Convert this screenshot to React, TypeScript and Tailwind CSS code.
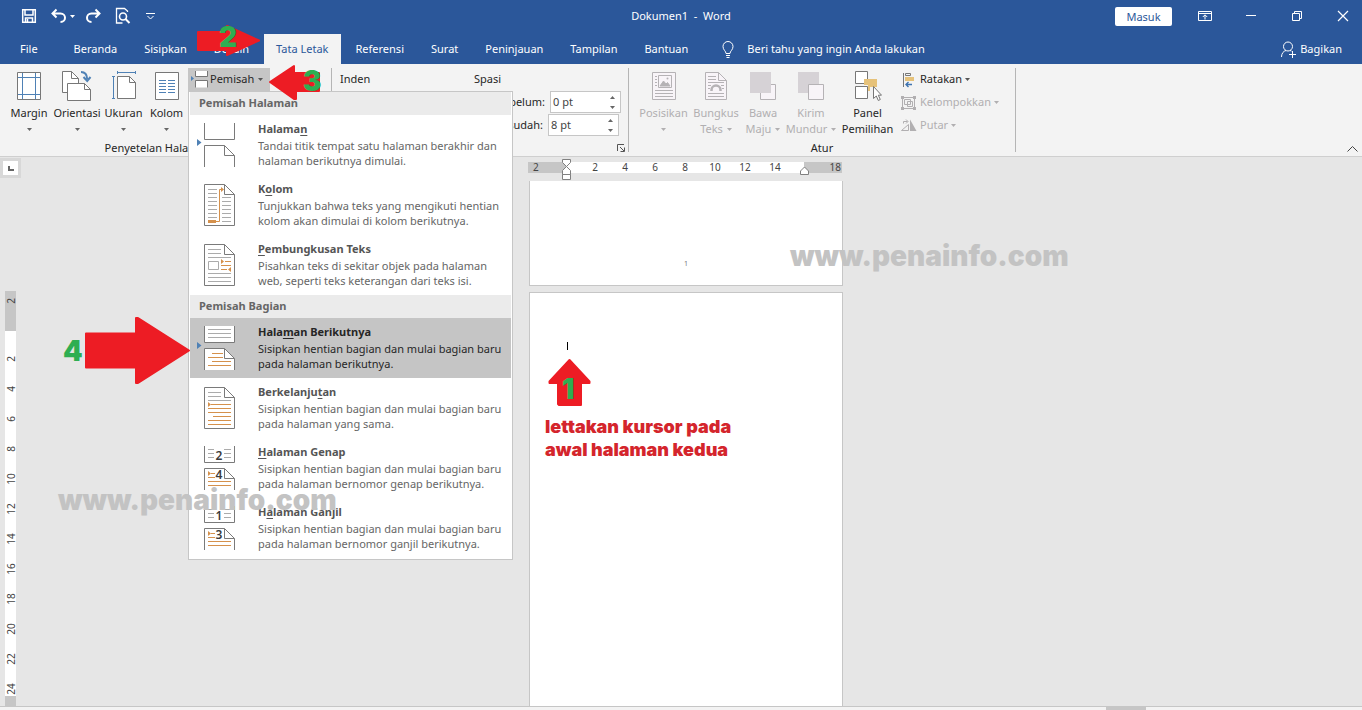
import React, { ReactNode } from 'react';

type MenuEntry = {
  title: [string, string, string];
  lines: [string, string];
  icon: ReactNode;
  active?: boolean;
};

const BLUE = '#4f81b5';
const ORANGE = '#d5914c';

const tabs = ['File', 'Beranda', 'Sisipkan', 'Desain', 'Tata Letak', 'Referensi', 'Surat', 'Peninjauan', 'Tampilan', 'Bantuan'];
const horizontalMarks = [2, 4, 6, 8, 10, 12, 14];
const verticalMarks = [2, 4, 6, 8, 10, 12, 14, 16, 18, 20, 22, 24];

const Caret = ({ className = '' }: { className?: string }) => (
  <svg className={`inline-block h-[3px] w-[5px] shrink-0 ${className}`} viewBox="0 0 5 3" fill="currentColor" aria-hidden="true">
    <path d="M0 0h5L2.5 3z" />
  </svg>
);

/* ---------- menu icons, 41x60, page outline from x=9 to x=40 ---------- */

const MenuIcon = ({ children }: { children: ReactNode }) => (
  <svg className="h-[60px] w-[41px] shrink-0" viewBox="0 0 41 60" fill="none" aria-hidden="true">
    {children}
  </svg>
);

const SplitPages = ({ pointer }: { pointer?: boolean }) => (
  <>
    <path d="M9.5 8V24.500H39.5V8" fill="#fff" stroke="#7a7a7a" />
    <path d="M9.5 52V30.500H29.5L39.5 40.500V52" fill="#fff" stroke="#7a7a7a" />
    <path d="M29.5 30.500V40.500H39.5" stroke="#7a7a7a" />
    {pointer && <path d="M2 24v7l4.500-3.500z" fill={BLUE} />}
  </>
);

const FullPage = () => (
  <>
    <path d="M9.500 9.500H29.500L39.500 19.500V50.500H9.500z" fill="#fff" stroke="#7a7a7a" />
    <path d="M29.500 9.500V19.500H39.500" stroke="#7a7a7a" />
  </>
);

const PageIcon = () => (
  <MenuIcon>
    <SplitPages pointer />
  </MenuIcon>
);

const ColumnIcon = () => (
  <MenuIcon>
    <FullPage />
    <path d="M13 14.500h9M13 18.500h9M13 22.500h9M13 26.500h9M13 30.500h9M13 34.500h9M13 38.500h9M13 42.500h9M27 22.500h9M27 26.500h9M27 30.500h9M27 34.500h9M27 38.500h9M27 42.500h9M27 46.500h9" stroke="#ababab" />
    <path d="M13 45h8v3h-8z" fill={ORANGE} />
    <path d="M21 46.500h3.500V14.500h2" stroke={ORANGE} />
    <path d="M26 12v5l3-2.500z" fill={ORANGE} />
  </MenuIcon>
);

const WrapIcon = () => (
  <MenuIcon>
    <FullPage />
    <path d="M13 14.500h13M13 18.500h13M13 22.500h23M13 38.500h23M13 42.500h23M13 46.500h23" stroke="#ababab" />
    <path d="M13.500 26.500h10v8h-10z" stroke="#ababab" />
    <path d="M26 24v5l3-2.500zM36 32v5l-3-2.500z" fill={ORANGE} />
    <path d="M30 26.500h6M26 30.500h10M26 34.500h6" stroke={ORANGE} />
  </MenuIcon>
);

const NextPageIcon = () => (
  <MenuIcon>
    <SplitPages pointer />
    <path d="M13 11.500h23M13 15.500h23M13 19.500h23" stroke="#ababab" />
    <path d="M17 35.500h11M13 39.500h15M17 43.500h19M13 47.500h23" stroke={ORANGE} />
  </MenuIcon>
);

const ContinuousIcon = () => (
  <MenuIcon>
    <FullPage />
    <path d="M13 14.500h13M13 18.500h13M13 22.500h23" stroke="#ababab" />
    <path d="M13 24v5l3-2.500z" fill={ORANGE} />
    <path d="M16 26.500h20M13 30.500h23M13 34.500h23M18 38.500h18M13 42.500h23M13 46.500h23" stroke={ORANGE} />
  </MenuIcon>
);

const NumberedIcon = ({ top, bottom }: { top: string; bottom: string }) => (
  <MenuIcon>
    <SplitPages />
    <path d="M13 11.500h6M29 11.500h7M13 15.500h6M29 15.500h7M13 19.500h6M29 19.500h7" stroke="#ababab" />
    <path d="M13 33v5l3-2.500z" fill={ORANGE} />
    <path d="M16 35.500h4M13 39.500h7M13 43.500h23M13 47.500h23" stroke={ORANGE} />
    <text x="24" y="22" textAnchor="middle" fill="#3b3b3b" className="font-['Noto_Sans'] text-[12px] font-semibold">
      {top}
    </text>
    <text x="24" y="41" textAnchor="middle" fill="#3b3b3b" className="font-['Noto_Sans'] text-[12px] font-semibold">
      {bottom}
    </text>
  </MenuIcon>
);

const pageBreaks: MenuEntry[] = [
  {
    title: ['Halama', 'n', ''],
    lines: ['Tandai titik tempat satu halaman berakhir dan', 'halaman berikutnya dimulai.'],
    icon: <PageIcon />,
  },
  {
    title: ['K', 'o', 'lom'],
    lines: ['Tunjukkan bahwa teks yang mengikuti hentian', 'kolom akan dimulai di kolom berikutnya.'],
    icon: <ColumnIcon />,
  },
  {
    title: ['', 'P', 'embungkusan Teks'],
    lines: ['Pisahkan teks di sekitar objek pada halaman', 'web, seperti teks keterangan dari teks isi.'],
    icon: <WrapIcon />,
  },
];

const sectionBreaks: MenuEntry[] = [
  {
    title: ['Hala', 'm', 'an Berikutnya'],
    lines: ['Sisipkan hentian bagian dan mulai bagian baru', 'pada halaman berikutnya.'],
    icon: <NextPageIcon />,
    active: true,
  },
  {
    title: ['Berkelanju', 't', 'an'],
    lines: ['Sisipkan hentian bagian dan mulai bagian baru', 'pada halaman yang sama.'],
    icon: <ContinuousIcon />,
  },
  {
    title: ['', 'H', 'alaman Genap'],
    lines: ['Sisipkan hentian bagian dan mulai bagian baru', 'pada halaman bernomor genap berikutnya.'],
    icon: <NumberedIcon top="2" bottom="4" />,
  },
  {
    title: ['H', 'a', 'laman Ganjil'],
    lines: ['Sisipkan hentian bagian dan mulai bagian baru', 'pada halaman bernomor ganjil berikutnya.'],
    icon: <NumberedIcon top="1" bottom="3" />,
  },
];

const MenuSection = ({ heading, entries }: { heading: string; entries: MenuEntry[] }) => (
  <section>
    <h2 className="h-[23px] bg-[#ebebeb] pl-[9px] font-bold leading-[21px] text-[#666]">{heading}</h2>
    {entries.map((entry) => (
      <button
        key={entry.title.join('')}
        type="button"
        role="menuitem"
        className={`flex h-[60px] w-full gap-[22px] pl-[5px] text-left ${entry.active ? 'bg-[#c5c5c5] text-[#262626]' : 'text-[#666]'}`}
      >
        {entry.icon}
        <span className="whitespace-nowrap pt-[6px] leading-[15px]">
          <span className={`mb-[2px] block font-bold ${entry.active ? '' : 'text-[#555]'}`}>
            {entry.title[0]}
            <span className="underline underline-offset-2">{entry.title[1]}</span>
            {entry.title[2]}
          </span>
          <span className="block">{entry.lines[0]}</span>
          <span className="block">{entry.lines[1]}</span>
        </span>
      </button>
    ))}
  </section>
);

/* ---------- title bar and tabs ---------- */

const TitleBar = () => (
  <header className="grid h-[34px] grid-cols-[1fr_auto_1fr] items-center pb-[2px] text-white">
    <div className="flex items-center pl-[21px]">
      <button type="button" aria-label="Simpan">
        <svg className="size-4" viewBox="0 0 16 16" fill="none" stroke="#fff" strokeWidth="1.500">
          <path d="M1.700 1.700h12.600v12.600H1.700z" />
          <path d="M4 2v5h8V2M4.500 14v-4h7v4M6.500 11v3" />
        </svg>
      </button>
      <button type="button" aria-label="Batalkan" className="ml-[14px] flex items-center gap-[3px]">
        <svg className="h-4 w-4" viewBox="0 0 16 16" fill="none" stroke="#fff" strokeWidth="2">
          <path d="M5.500 1.500L1.500 5.500l4 4M2 5.500h7.500c6 0 6 8.500 0 8.500" />
        </svg>
        <Caret />
      </button>
      <button type="button" aria-label="Ulangi" className="ml-[10px]">
        <svg className="h-4 w-4" viewBox="0 0 16 16" fill="none" stroke="#fff" strokeWidth="2">
          <path d="M10.500 1.500l4 4-4 4M14 5.500H6.500c-6 0-6 8.500 0 8.500" />
        </svg>
      </button>
      <button type="button" aria-label="Pratinjau cetak" className="ml-[14px]">
        <svg className="h-[18px] w-4" viewBox="0 0 16 18" fill="none" stroke="#fff" strokeWidth="1.300">
          <path d="M12.500 5V4L9.500 1.500h-8v14.500h6" />
          <circle cx="8" cy="9.500" r="3.500" strokeWidth="1.600" />
          <path d="M10.500 12l4 4" strokeWidth="2" />
        </svg>
      </button>
      <button type="button" aria-label="Kustomisasi bilah alat" className="ml-[15px]">
        <svg className="h-[8px] w-[9px]" viewBox="0 0 9 8" fill="none" stroke="#fff">
          <path d="M0 1.500h9M1.500 4l3 3 3-3" />
        </svg>
      </button>
    </div>
    <h1 className="whitespace-pre">Dokumen1  -  Word</h1>
    <div className="flex items-center justify-end pr-3">
      <button type="button" className="mr-[26px] h-[19px] w-[57px] rounded-[2px] bg-white leading-[17px] text-[#2b579a]">
        Masuk
      </button>
      <div className="flex gap-8">
        <button type="button" aria-label="Opsi tampilan pita">
          <svg className="size-[14px]" viewBox="0 0 14 14" fill="none" stroke="#fff">
            <path d="M.5 2.500h13v9H.5zM.5 4.500h13M7 10.500V6M4.800 8L7 5.800 9.200 8" />
          </svg>
        </button>
        <button type="button" aria-label="Minimalkan">
          <svg className="size-[14px]" viewBox="0 0 14 14" stroke="#fff">
            <path d="M2 6.500h10" />
          </svg>
        </button>
        <button type="button" aria-label="Pulihkan">
          <svg className="size-[14px]" viewBox="0 0 14 14" fill="none" stroke="#fff">
            <path d="M2.500 4.500h7v7h-7zM4.500 4.500v-2h7v7h-2" />
          </svg>
        </button>
        <button type="button" aria-label="Tutup">
          <svg className="size-[14px]" viewBox="0 0 14 14" stroke="#fff" strokeWidth="1.200">
            <path d="M2 2l10 10M12 2L2 12" />
          </svg>
        </button>
      </div>
    </div>
  </header>
);

const TabBar = () => (
  <nav className="flex h-[30px] items-stretch pl-2 text-white">
    <div className="flex gap-[3px]">
      {tabs.map((tab) => (
        <button
          key={tab}
          type="button"
          className={`px-3 ${tab === 'File' ? 'mr-[9px]' : ''} ${tab === 'Tata Letak' ? 'bg-[#f3f3f3] text-[#2b579a]' : ''}`}
        >
          {tab}
        </button>
      ))}
    </div>
    <button type="button" className="ml-[22px] flex items-center gap-[13px]">
      <svg className="h-[17px] w-3" viewBox="0 0 12 17" fill="none" stroke="#fff">
        <path d="M4 12.500c0-2.500-3-3.500-3-7a5 5 0 0 1 10 0c0 3.500-3 4.500-3 7zM4 14.500h4M4.500 16.500h3" />
      </svg>
      Beri tahu yang ingin Anda lakukan
    </button>
    <button type="button" className="ml-auto flex items-center gap-1 pr-5">
      <svg className="h-[17px] w-[15px]" viewBox="0 0 15 17" fill="none" stroke="#fff">
        <circle cx="7" cy="5.500" r="4.500" />
        <path d="M.5 16c0-3.500 2-6 4.500-6.500M9 9.500l1.500.5M8 13.500h7M11.500 10v7" />
      </svg>
      Bagikan
    </button>
  </nav>
);

/* ---------- ribbon ---------- */

const LargeButton = ({
  icon,
  label,
  second,
  caret = true,
  disabled,
  className,
}: {
  icon: ReactNode;
  label: string;
  second?: string;
  caret?: boolean;
  disabled?: boolean;
  className: string;
}) => (
  <button
    type="button"
    disabled={disabled}
    className={`flex flex-col items-center whitespace-nowrap pt-[6px] leading-4 ${disabled ? 'text-[#b1afb1]' : 'text-[#262626]'} ${className}`}
  >
    {icon}
    <span className="mt-[3px]">{label}</span>
    <span className="flex h-4 items-center gap-1">
      {second}
      {caret && <Caret className={disabled ? '' : 'text-[#666]'} />}
    </span>
  </button>
);

const Divider = () => <div className="my-1 w-px bg-[#b5b5b5]" />;

const GroupLabel = ({ children, className = '' }: { children?: ReactNode; className?: string }) => (
  <div className={`h-4 text-center leading-4 text-[#262626] ${className}`}>{children}</div>
);

const BreaksButton = () => (
  <div className="relative pt-1">
    <button type="button" aria-haspopup="menu" aria-expanded="true" className="flex h-[23px] w-[82px] items-center bg-[#c6c6c6] pl-[3px] text-[#262626]">
      <svg className="mr-[2px] h-[17px] w-[17px]" viewBox="0 0 17 17" fill="none">
        <path d="M4.500 0v5.500h12V0M4.500 16.500v-7h12v7" fill="#fff" stroke="#777" />
        <path d="M0 5v5l3-2.500z" fill={BLUE} />
      </svg>
      Pemisah
      <Caret className="ml-1 text-[#555]" />
    </button>
    <div role="menu" className="absolute left-0 top-[27px] z-20 w-[325px] border border-[#c6c6c6] bg-white px-px pb-px">
      <MenuSection heading="Pemisah Halaman" entries={pageBreaks} />
      <MenuSection heading="Pemisah Bagian" entries={sectionBreaks} />
    </div>
  </div>
);

const SpacingField = ({ id, label, value, labelWidth }: { id: string; label: string; value: string; labelWidth: string }) => (
  <div className="flex items-center gap-[5px]">
    <label htmlFor={id} className={`text-right text-[#262626] ${labelWidth}`}>
      {label}
    </label>
    <div className="flex h-[22px] w-[71px] border border-[#c6c6c6] bg-white">
      <input id={id} type="text" defaultValue={value} className="w-[54px] bg-transparent pl-[2px] text-[#444] outline-none" />
      <div className="flex flex-1 flex-col text-[#666]">
        <button type="button" aria-label={`Tambah ${label}`} className="flex flex-1 items-center justify-center">
          <Caret className="rotate-180" />
        </button>
        <button type="button" aria-label={`Kurangi ${label}`} className="flex flex-1 items-center justify-center">
          <Caret />
        </button>
      </div>
    </div>
  </div>
);

const PageSetupGroup = () => (
  <div className="flex w-[331px] flex-col pl-[5px]">
    <div className="flex flex-1 items-start">
      <LargeButton
        className="w-12"
        label="Margin"
        icon={
          <svg className="h-8 w-6" viewBox="0 0 24 32" fill="none">
            <path d="M.5 2.500h23v27H.5z" fill="#fff" stroke="#777" />
            <path d="M5.500 3v26M18.500 3v26M1 7.500h22M1 24.500h22" stroke={BLUE} />
          </svg>
        }
      />
      <LargeButton
        className="w-12"
        label="Orientasi"
        icon={
          <svg className="h-8 w-[30px]" viewBox="0 0 30 32" fill="none">
            <path d="M.5 1.500h9l7 7v14H.5z" fill="#fff" stroke="#777" />
            <path d="M9.500 1.500v7h7" stroke="#777" />
            <path d="M5.500 13.500h17l6 6v11h-23z" fill="#fff" stroke="#777" />
            <path d="M22.500 13.500v6h6" stroke="#777" />
            <path d="M19 2c4 0 6 2.500 6.200 7" stroke={BLUE} strokeWidth="2" />
            <path d="M21.500 7l3.700 4 3.300-4" stroke={BLUE} strokeWidth="2" />
          </svg>
        }
      />
      <LargeButton
        className="w-[45px]"
        label="Ukuran"
        icon={
          <svg className="h-8 w-6" viewBox="0 0 24 32" fill="none">
            <path d="M5.500 6.500h12l6 6v16h-18z" fill="#fff" stroke="#777" />
            <path d="M17.500 6.500v6h6" stroke="#777" />
            <path d="M5 2.500h19M5.500 1v3M23.500 1v3M1.500 6v23M0 6.500h3M0 28.500h3" stroke={BLUE} />
          </svg>
        }
      />
      <LargeButton
        className="w-[41px]"
        label="Kolom"
        icon={
          <svg className="h-8 w-6" viewBox="0 0 24 32" fill="none">
            <path d="M.5 2.500h23v27H.5z" fill="#fff" stroke="#777" />
            <path d="M4 10.500h7M4 13.500h7M4 16.500h7M4 19.500h7M4 22.500h7M13 10.500h7M13 13.500h7M13 16.500h7M13 19.500h7M13 22.500h7" stroke={BLUE} />
          </svg>
        }
      />
      <div className="ml-px">
        <BreaksButton />
      </div>
    </div>
    <GroupLabel className="pr-5">Penyetelan Halaman</GroupLabel>
  </div>
);

const ParagraphGroup = () => (
  <div className="flex w-[296px] flex-col">
    <div className="flex flex-1 pl-2 pt-1 text-[#262626]">
      <div className="w-[134px] leading-[21px]">Inden</div>
      <div>
        <div className="h-[23px] leading-[21px]">Spasi</div>
        <div className="flex flex-col gap-px">
          <SpacingField id="before" label="Sebelum:" value="0 pt" labelWidth="w-[71px]" />
          <SpacingField id="after" label="Sesudah:" value="8 pt" labelWidth="w-[69px]" />
        </div>
      </div>
    </div>
    <div className="flex h-4 items-center justify-end pr-[3px]">
      <button type="button" aria-label="Pengaturan paragraf">
        <svg className="block size-2" viewBox="0 0 8 8" fill="none" stroke="#555">
          <path d="M.5 7V.5H7M3 3l4 4M7.500 3.500v4h-4" />
        </svg>
      </button>
    </div>
  </div>
);

const ArrangeGroup = () => (
  <div className="flex w-[386px] flex-col">
    <div className="flex flex-1 items-start pl-[9px]">
      <LargeButton
        className="w-[51px]"
        disabled
        label="Posisikan"
        icon={
          <svg className="h-8 w-6" viewBox="0 0 24 32" fill="none" stroke="#b5b2b5">
            <path d="M.5 2.500h23v27H.5z" fill="#f8f4f8" />
            <path d="M6.500 5.500h13v12h-13z" />
            <path d="M8 16l3.500-5 2.500 3 1.500-1.500L18 16z" fill="#b5b2b5" />
            <circle cx="15.500" cy="8.500" r="1" fill="#b5b2b5" stroke="none" />
            <path d="M3 6.500h2M3 9.500h2M3 12.500h2M3 15.500h2M3 20.500h18M3 23.500h18M3 26.500h18" />
          </svg>
        }
      />
      <LargeButton
        className="w-[54px]"
        disabled
        label="Bungkus"
        second="Teks"
        icon={
          <svg className="h-8 w-[22px]" viewBox="0 0 22 32" fill="none" stroke="#b5b2b5">
            <path d="M.5 2.500h13l8 8v19H.5z" fill="#f8f4f8" />
            <path d="M13.500 2.500v8h8M3 6.500h8M3 9.500h8M3 12.500h16M3 15.500h3M16 15.500h3M3 18.500h2M17 18.500h2M3 23.500h16M3 26.500h16" />
            <path d="M6.500 21v-1a4.500 4.500 0 0 1 9 0v1" strokeWidth="2.500" />
          </svg>
        }
      />
      <LargeButton
        className="w-10"
        disabled
        label="Bawa"
        second="Maju"
        icon={
          <svg className="h-8 w-[26px]" viewBox="0 0 26 32">
            <path d="M10.500 14.500h15v15h-15z" fill="#f8f4f8" stroke="#b5b2b5" />
            <path d="M0 2h21v21H0z" fill="#d6d2d6" />
          </svg>
        }
      />
      <LargeButton
        className="w-14"
        disabled
        label="Kirim"
        second="Mundur"
        icon={
          <svg className="h-8 w-[26px]" viewBox="0 0 26 32">
            <path d="M0 2h21v21H0z" fill="#d6d2d6" />
            <path d="M10.500 14.500h15v15h-15z" fill="#f8f4f8" stroke="#b5b2b5" />
          </svg>
        }
      />
      <LargeButton
        className="w-[57px]"
        label="Panel"
        second="Pemilihan"
        caret={false}
        icon={
          <svg className="h-8 w-7" viewBox="0 0 28 32">
            <path d="M1.500 1.500h12v12h-12zM1.500 16.500h12v12h-12z" fill="#fff" stroke="#777" />
            <path d="M10 9h13v8h-7v4h-2v-6h-4z" fill="#e6c27a" />
            <path d="M19.500 16.500v12l2.800-2.500 2 4.500 2-1-2-4.300h3.200z" fill="#fff" stroke="#777" />
          </svg>
        }
      />
      <div className="ml-1 flex flex-col pt-1 text-[#b1afb1]">
        <button type="button" className="flex h-[23px] items-center text-[#262626]">
          <svg className="mr-[3px] h-4 w-[17px]" viewBox="0 0 17 16" fill="none">
            <path d="M3.500 1v14M5.500 1.500h5v2h-5z" stroke="#777" />
            <path d="M5 5h9v4H5z" fill="#e6c27a" />
            <path d="M12 12.500H6M8.500 10L6 12.500 8.500 15" stroke="#3f74b0" strokeWidth="1.400" />
          </svg>
          Ratakan
          <Caret className="ml-[3px] text-[#555]" />
        </button>
        <button type="button" disabled className="flex h-[23px] items-center">
          <svg className="mr-[3px] h-4 w-[17px]" viewBox="0 0 17 16" fill="none" stroke="#b1afb1">
            <path d="M2.500 2.500h12v11h-12zM4.500 4.500h6v5h-6zM7.500 6.500h5v5h-5z" />
            <path d="M1 1h3v3H1zM13 1h3v3h-3zM1 12h3v3H1zM13 12h3v3h-3z" fill="#b1afb1" stroke="none" />
          </svg>
          Kelompokkan
          <Caret className="ml-[3px]" />
        </button>
        <button type="button" disabled className="flex h-[23px] items-center">
          <svg className="mr-[3px] h-4 w-[17px]" viewBox="0 0 17 16" fill="none" stroke="#b1afb1">
            <path d="M1.500 12.500h7v-6zM3.500 5.500v-2h4M6 1.500l2 2-2 2" />
            <path d="M10 1.500V13h6.500z" fill="#b1afb1" stroke="none" />
          </svg>
          Putar
          <Caret className="ml-[3px]" />
        </button>
      </div>
    </div>
    <GroupLabel>Atur</GroupLabel>
  </div>
);

/* ---------- workspace ---------- */

const VerticalRuler = () => (
  <div className="flex w-[22px] shrink-0 flex-col">
    <button type="button" aria-label="Tab kiri" className="mt-px flex h-5 w-[21px] items-center justify-center border-[3px] border-[#d8d8d8] bg-white">
      <svg className="block h-[5px] w-[6px]" viewBox="0 0 6 5" fill="none" stroke="#666" strokeWidth="2">
        <path d="M1 0v4h5" />
      </svg>
    </button>
    <div className="ml-[5px] mt-[113px] flex w-[11px] min-h-0 flex-1 flex-col text-[10px] text-[#444]">
      <div className="flex h-10 shrink-0 justify-center bg-[#c6c6c6] pt-[2px]">
        <span className="h-4 -rotate-90 leading-4">2</span>
      </div>
      <div className="min-h-0 flex-1 bg-white pt-[13px]">
        {verticalMarks.map((mark) => (
          <div key={mark} className="flex h-[30px] items-center justify-center">
            <span className="-rotate-90 leading-4">{mark}</span>
          </div>
        ))}
      </div>
      <div className="h-[10px] shrink-0 bg-[#c6c6c6]" />
    </div>
  </div>
);

const HorizontalRuler = () => (
  <div className="relative mr-[2px] mt-[5px] flex h-[11px] w-[314px] shrink-0 text-[10px] leading-[11px] text-[#444]">
    <div className="w-[38px] bg-[#c6c6c6] pl-[5px]">2</div>
    <div className="flex w-[238px] bg-white pl-[14px]">
      {horizontalMarks.map((mark) => (
        <span key={mark} className="w-[30px] text-center">
          {mark}
        </span>
      ))}
    </div>
    <div className="flex-1 bg-[#c6c6c6] pr-px text-right">18</div>
    <svg className="absolute -top-[4px] left-[33px] h-[24px] w-[11px]" viewBox="0 0 11 24" fill="#fff" stroke="#808080">
      <path d="M1.500 1.500h8v3l-4 4-4-4zM1.500 16.500v-4l4-4 4 4v4zM1.500 16.500h8v5h-8z" />
    </svg>
    <svg className="absolute left-[271px] top-[4px] h-[9px] w-[11px]" viewBox="0 0 11 9" fill="#fff" stroke="#808080">
      <path d="M1.500 8.500V5l4-4 4 4v3.500z" />
    </svg>
  </div>
);

const Workspace = () => (
  <main className="flex min-h-0 flex-1 border-t border-[#cfcfcf] bg-[#e6e6e6]">
    <VerticalRuler />
    <div className="flex min-w-0 flex-1 flex-col items-center overflow-hidden pr-3">
      <HorizontalRuler />
      <div className="mt-2 flex h-[105px] w-[314px] shrink-0 items-end justify-center border border-t-0 border-[#c6c6c6] bg-white pb-4">
        <span className="text-[7px] leading-[10px] text-[#777]">1</span>
      </div>
      <div className="mt-[6px] flex w-[314px] flex-1 flex-col items-start border border-b-0 border-[#c6c6c6] bg-white pt-[49px]">
        <div className="ml-[37px] h-2 w-px bg-black" />
        <svg className="ml-[18px] mt-2 h-12 w-[44px] shrink-0" viewBox="0 0 44 48">
          <path d="M21.500 2L41.500 23.500V25H33V47H11L10 46V25H1.500V23.500z" fill="#ed1c24" stroke="#ed1c24" strokeWidth="2" strokeLinejoin="round" />
          <text x="20" y="41" textAnchor="middle" fill="#2eae52" className="font-['Inter'] text-[28px] font-black">
            1
          </text>
        </svg>
        <p className="ml-[15px] mt-[9px] whitespace-nowrap font-['Inter'] text-[18px] font-black leading-[23px] text-[#d4252c]">
          lettakan kursor pada
          <br />
          awal halaman kedua
        </p>
      </div>
    </div>
  </main>
);

/* ---------- callout arrows and watermarks drawn over the window ---------- */

const Callouts = () => (
  <div className="pointer-events-none font-['Inter'] font-black text-[#2eae52]">
    <svg className="absolute left-[195px] top-6 z-30 h-[33px] w-[66px]" viewBox="0 0 66 33">
      <path d="M3 8h29V2L64 16.500 32 31v-5H3z" fill="#ed1c24" stroke="#ed1c24" strokeWidth="2" strokeLinejoin="round" />
      <text x="33" y="23" textAnchor="middle" fill="#2eae52" className="text-[28px]">
        2
      </text>
    </svg>
    <svg className="absolute left-[268px] top-16 z-30 h-[37px] w-[54px]" viewBox="0 0 54 37">
      <path d="M2 18L26 2v7h25v18H28v8h-2z" fill="#ed1c24" stroke="#ed1c24" strokeWidth="2" strokeLinejoin="round" />
      <text x="44" y="27" textAnchor="middle" fill="#2eae52" className="text-[28px]">
        3
      </text>
    </svg>
    <div className="absolute left-[63px] top-[316px] z-30 flex items-center gap-[3px]">
      <span className="w-[18px] text-[28px] leading-[28px]">4</span>
      <svg className="h-[69px] w-[108px]" viewBox="0 0 108 69">
        <path d="M2 17.500h50V2h2L105 34.500 54 67h-2V51.500H2z" fill="#ed1c24" stroke="#ed1c24" strokeWidth="2" strokeLinejoin="round" />
      </svg>
    </div>
    <span className="absolute left-[58px] top-[486px] z-30 text-[28px] leading-[28px] text-[#c3c3c3]">www.penainfo.com</span>
    <span className="absolute left-[790px] top-[242px] z-30 text-[28px] leading-[28px] text-[#c3c3c3]">www.penainfo.com</span>
  </div>
);

const App = () => {
  return (
    <div className="relative flex h-screen flex-col overflow-hidden font-['Noto_Sans',sans-serif] text-[11px]">
      <div className="bg-[#2b579a]">
        <TitleBar />
        <TabBar />
      </div>
      <div className="relative z-10 flex h-[92px] bg-[#f3f3f3]">
        <PageSetupGroup />
        <Divider />
        <ParagraphGroup />
        <Divider />
        <ArrangeGroup />
        <Divider />
        <button type="button" aria-label="Ciutkan pita" className="ml-auto self-end pb-1 pr-1">
          <svg className="block h-[6px] w-[11px]" viewBox="0 0 11 6" fill="none" stroke="#444">
            <path d="M.5 5.500l5-5 5 5" />
          </svg>
        </button>
      </div>
      <Workspace />
      <footer className="flex h-1 shrink-0 justify-end border-t border-[#c6c6c6] bg-[#f3f3f3] pr-[216px]">
        <div className="w-10 bg-[#c6c6c6]" />
      </footer>
      <Callouts />
    </div>
  );
};

export default App;
